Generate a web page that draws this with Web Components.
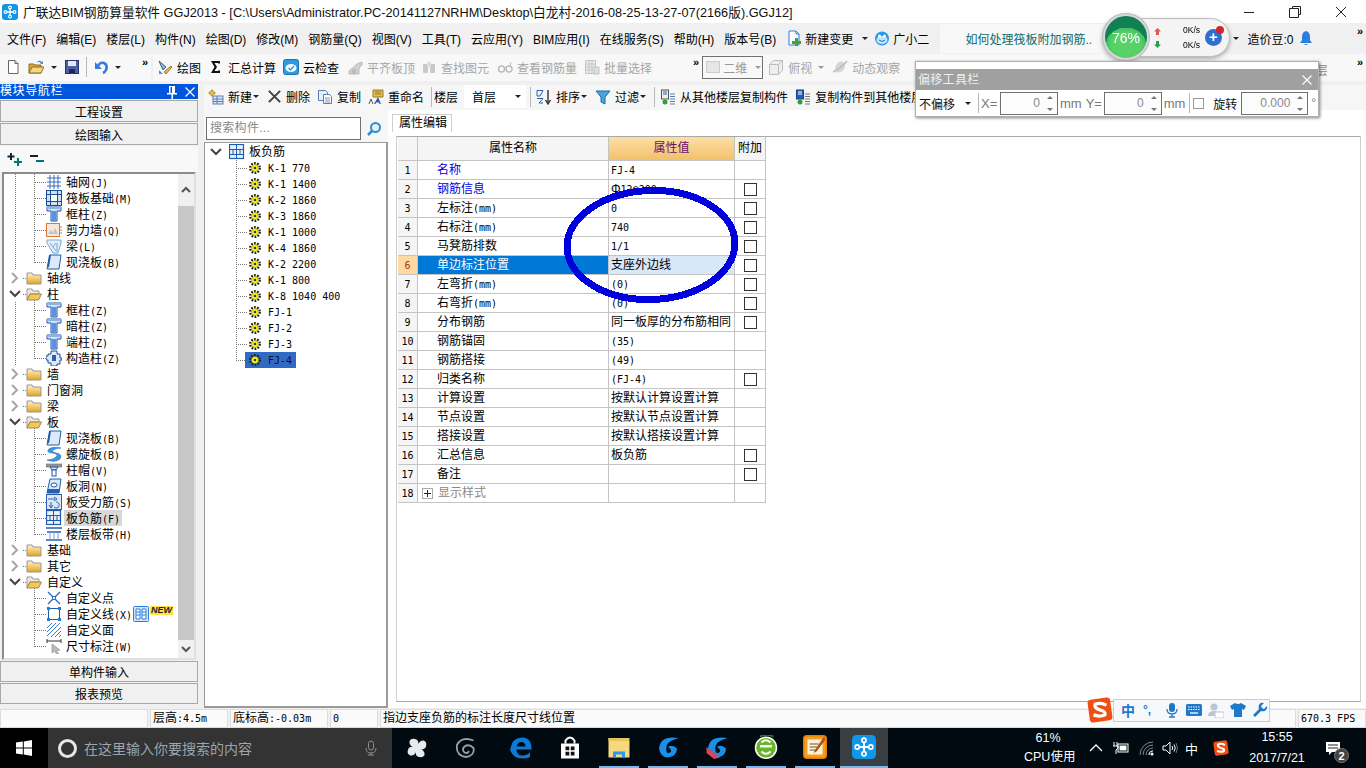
<!DOCTYPE html>
<html lang="zh">
<head>
<meta charset="utf-8">
<title>GGJ2013</title>
<style>
  html, body { margin: 0; height: 100%; }
  body {
    position: relative; width: 1366px; height: 768px; overflow: hidden;
    display: flex; flex-direction: column; background: #f0f0f0; color: #000;
    font: 12px "Liberation Sans", "Noto Sans CJK SC", sans-serif;
  }
  .work { display: flex; height: 624px; }
  .work-right { flex: 1; display: flex; flex-direction: column; margin-left: 6px; min-width: 0; }
  .work-body { flex: 1; display: flex; min-height: 0; }
</style>
</head>
<body>
<title-bar></title-bar>
<menu-bar></menu-bar>
<main-toolbar></main-toolbar>
<div class="work">
  <nav-panel></nav-panel>
  <div class="work-right">
    <comp-toolbar></comp-toolbar>
    <div class="work-body">
      <comp-panel></comp-panel>
      <prop-panel></prop-panel>
    </div>
  </div>
</div>
<status-bar></status-bar>
<task-bar></task-bar>
<net-widget></net-widget>
<offset-toolbar></offset-toolbar>
<ink-ellipse></ink-ellipse>
<ime-bar></ime-bar>

<script>
// icon shapes, all drawn in a 16x16 box
const ICONS = {
  logo: '<rect width="16" height="16" rx="3" fill="#1296e8"/><path d="M8 4.500v7M4.500 8h7" stroke="#fff" stroke-width="1.300"/><g fill="none" stroke="#fff" stroke-width="1.100"><circle cx="8" cy="3.500" r="1.400"/><circle cx="8" cy="12.500" r="1.400"/><circle cx="3.500" cy="8" r="1.400"/><circle cx="12.500" cy="8" r="1.400"/></g>',
  doc: '<path d="M3.500 1.500h6.500l3 3v10h-9.500z" fill="#fff" stroke="#666"/><path d="M10 1.500v3h3" fill="#ddd" stroke="#666"/>',
  open: '<path d="M1 5h5l1 1h6v8H1z" fill="#d9a53c" stroke="#8f6d25"/><path d="M4 8h12l-3 6H1z" fill="#f6d77f" stroke="#8f6d25"/><path d="M8 4q3-4 6-1l1-1v3h-3l1-1q-3-2-5 0" fill="#4a90d0"/>',
  save: '<rect x="1.500" y="1.500" width="13" height="13" fill="#4a5fa8" stroke="#27346b"/><rect x="4" y="2" width="8" height="5" fill="#e4e9f5"/><rect x="5" y="10" width="6" height="4" fill="#1f2850"/>',
  undo: '<path d="M4 7q2-4 6-3 4 2 2 7-1 2-3 3" fill="none" stroke="#3a7bd5" stroke-width="2.600"/><path d="M1 3l7 7H1z" fill="#3a7bd5"/>',
  paint: '<path d="M2 2l7 6-3 3z" fill="#8fb8e0" stroke="#3a5f8f"/><path d="M7 13l7-6 1 1-6 7z" fill="#e8c04a" stroke="#96782a"/><path d="M2 11l4 4H2z" fill="#4a90d0"/>',
  sigma: '<path d="M3 2h9v2.500H10V4H6.500L9 8l-2.500 4H10v-.5h2V14H3l3.500-6z" fill="#111"/>',
  cloud: '<rect x=".5" y=".5" width="15" height="15" rx="2" fill="#2f9ae0" stroke="#1a74b5"/><ellipse cx="8" cy="9" rx="5.500" ry="4" fill="#fff"/><path d="M5.500 9l2 2 3.500-4" fill="none" stroke="#2f9ae0" stroke-width="1.500"/>',
  align: '<path d="M2 12l8-7 5-2v3l-3 3v6H2z" fill="#d0d0d0" stroke="#bbb"/><rect x="5" y="10" width="4" height="5" fill="#bbb"/>',
  binoc: '<rect x="2" y="5" width="5" height="9" rx="1" fill="#c9c9c9"/><rect x="9" y="5" width="5" height="9" rx="1" fill="#c9c9c9"/><rect x="6" y="3" width="4" height="5" fill="#ddd"/>',
  glasses: '<circle cx="4.500" cy="10" r="3" fill="none" stroke="#bbb" stroke-width="1.500"/><circle cx="12" cy="10" r="3" fill="none" stroke="#bbb" stroke-width="1.500"/><path d="M7 9q1-1 2 0M13 7l1-4" stroke="#bbb" fill="none"/>',
  batch: '<path d="M1.500 1.500h10v13h-10zM1.500 5h10M1.500 8h10M1.500 11h10M5 1.500v13M8 1.500v13" fill="#eee" stroke="#c4c4c4"/><path d="M10 8h5v7h-5z" fill="#ddd" stroke="#c4c4c4"/>',
  cube: '<path d="M1.500 5.500l4-4h9v10l-4 4h-9z" fill="#eee" stroke="#bdbdbd"/><path d="M1.500 5.500h9v10M10.500 5.500l4-4" fill="none" stroke="#bdbdbd"/>',
  orbit: '<ellipse cx="8" cy="8" rx="4.500" ry="6" transform="rotate(35 8 8)" fill="#d6d6d6"/><path d="M1 13Q8 10 15 2" stroke="#bbb" stroke-width="1.500" fill="none"/>',
  add: '<rect x="5" y="7" width="10" height="8" fill="#dce6f4" stroke="#5a7fb5"/><path d="M5 10h10M5 12.500h10M9 7v8" stroke="#5a7fb5"/><path d="M3 1h2v2h2v2H5v2H3V5H1V3h2z" fill="#f0c23c" stroke="#a07d1c" stroke-width=".6"/>',
  del: '<path d="M2 2l12 12M14 2L2 14" stroke="#444" stroke-width="2.200"/>',
  copy: '<path d="M1.500 1.500h7l2 2v8h-9z" fill="#e8eff8" stroke="#5a7fb5"/><path d="M6.500 5.500h6l2 2v7h-8z" fill="#fff" stroke="#5a7fb5"/><path d="M8 9h5M8 11h5M8 13h5" stroke="#7a9ac8"/>',
  rename: '<path d="M5 1h10v7H5z" fill="#e6c04e" stroke="#96782a"/><path d="M7 3h6M7 5h6" stroke="#96782a"/><path d="M10 8l3 7h-1.500l-.5-1.500H8L7.500 15H6z" fill="#2a5fb0"/><path d="M1 15l2-5 2 5" fill="none" stroke="#555"/>',
  sort: '<path d="M1 1.500h6L4 7H1zM1 9.500h6L3 14h4" fill="none" stroke="#2a5fb0"/><path d="M12 1v12M9.500 11l2.500 4 2.500-4" fill="none" stroke="#222" stroke-width="1.300"/>',
  funnel: '<path d="M1 2h14L10 8v7l-4-2V8z" fill="#4aa3df" stroke="#1d6fa8"/>',
  floorin: '<rect x="1.500" y="1" width="7" height="9" fill="#eee" stroke="#555"/><path d="M3 3h4M3 5h4" stroke="#2a5fb0"/><path d="M10 5h5M10 7.500h5M10 10h5M10 12.500h5M10 15h5" stroke="#5a7fb5"/><circle cx="5" cy="13" r="2.500" fill="#2e9e3e"/>',
  floorout: '<rect x="1.500" y="1" width="7" height="9" fill="#2a5fb0" stroke="#1a3f80"/><path d="M3 3h4M3 5h4" stroke="#fff"/><path d="M10 5h5M10 7.500h5M10 10h5M10 12.500h5M10 15h5" stroke="#777"/><circle cx="5" cy="13" r="2.500" fill="#2e9e3e"/>',
  search: '<circle cx="9.500" cy="6.500" r="4.500" fill="#e3f2fb" stroke="#2c8fd0" stroke-width="2"/><path d="M6 10l-4 4" stroke="#2c8fd0" stroke-width="2.500"/>',
  plusplus: '<path d="M5 2v7M1.500 5.500h7" stroke="#123" stroke-width="2"/><path d="M12 7v8M8 11h8" stroke="#077" stroke-width="2"/>',
  minusminus: '<path d="M1 5h8" stroke="#123" stroke-width="2"/><path d="M7 10h8" stroke="#077" stroke-width="2"/>',
  grid: '<path d="M1 4h14M1 8h14M1 12h14M4 1v14M8 1v14M12 1v14" stroke="#3a6cb8" fill="none"/>',
  raft: '<rect x=".5" y=".5" width="15" height="15" fill="#cfe0f2" stroke="#1d4f94"/><rect x="4.500" y="4.500" width="7" height="7" fill="#fff" stroke="#1d4f94"/><path d="M.5 4.500h15M.5 11.500h15M4.500 .5v15M11.500 .5v15" stroke="#1d4f94"/>',
  col: '<path d="M1 1h14v4h-4v10H5V5H1z" fill="#cfe0f5" stroke="#2258a8"/><path d="M6 5h4v10H6z" fill="#5d93dc"/><path d="M1 1h14v2H1z" fill="#8fb5e6"/>',
  wall: '<rect x=".5" y="1.500" width="13" height="13" fill="#f3e8dc" stroke="#d87a3c"/><path d="M2 12l3-4 2 3 2-5 3 6z" fill="#c4c4c4"/><path d="M13 5h3M13 8h3M13 11h3" stroke="#d87a3c"/>',
  beam: '<path d="M1 2h14v3l-3 10H7L1 5z" fill="#e3eefa" stroke="#7aa8dc"/><path d="M4 5l6 8M10 5l-3 4M11 5v9" stroke="#7aa8dc" fill="none"/>',
  slab: '<path d="M4 1h11l-2 14H1z" fill="#dce9f8" stroke="#1f5cb0"/><path d="M2 13l2-12" stroke="#1f5cb0" stroke-width="2"/>',
  conn: '<path d="M5 1h6v3h3v4h2v2h-2v4h-3v2H5v-3H2v-3H0V6h2V4h3z" fill="#dce9f8" stroke="#1f4f96"/><rect x="6" y="5" width="4" height="6" fill="#2a5fb0"/>',
  spiral: '<path d="M15 2Q5 0 2 4q-1 3 5 3 6 1 3 4-3 3-9 3 8 3 13-1 3-5-4-6-5-1-3-3 3-2 8-2" fill="#3d95e0" stroke="#1f6fbc" stroke-width=".6"/>',
  cap: '<rect y="2" width="16" height="3" fill="#999" stroke="#666" stroke-width=".6"/><path d="M4 5h8l-2 3H6z" fill="#cfe0f5" stroke="#2258a8"/><rect x="6" y="8" width="4" height="6" fill="#fff" stroke="#2258a8"/>',
  hole: '<path d="M4 1h11l-2 14H1z" fill="#dce9f8" stroke="#1f5cb0"/><ellipse cx="8" cy="7" rx="3" ry="2" fill="#fff" stroke="#1f5cb0"/><path d="M2 11h11v4H1z" fill="#2a5fb0"/>',
  slabrb: '<rect x=".5" y=".5" width="15" height="15" fill="#dbe8f7" stroke="#2a5fb0"/><path d="M2 5h7M8 3l3 2-3 2M5 8v6M3 11l2 3 2-3M10 8a3 3 0 1 1-2 5" fill="none" stroke="#2a5fb0"/>',
  slabn: '<rect x=".5" y=".5" width="14" height="14" fill="#e8f0fa" stroke="#1f5cb0" stroke-width="1.200"/><path d="M1 5.500h13M1 10.500h13M4 5.500v5M11 5.500v5M7.500 .5v14" stroke="#1f5cb0" fill="none"/>',
  band: '<path d="M0 2h16M0 14h16M1 6h14" stroke="#2a5fb0" stroke-width="1.500"/><path d="M4 6v8M8 6v8M12 6v8" stroke="#6f9ad4"/>',
  point: '<path d="M2 2l12 12M14 2L2 14" stroke="#2a6bc0" stroke-width="1.300"/><circle cx="8" cy="8" r="1.600" fill="#fff" stroke="#2a6bc0"/>',
  line: '<rect x="2.500" y="2.500" width="11" height="11" fill="none" stroke="#1f5cb0"/><path d="M1 1h3v3H1zM12 1h3v3h-3zM1 12h3v3H1zM12 12h3v3h-3z" fill="#1f7fe0"/>',
  face: '<path d="M1 6l5-5M1 10l9-9M1 14L14 1M5 15L15 5M9 15l6-6M13 15l2-2" stroke="#3f7ad0"/>',
  dim: '<path d="M1 1v4M15 1v4M1 3h14" stroke="#333"/><path d="M6 6l8 6-3.500 .5 2 3-2 .5-2-3-2.500 2z" fill="#bbb" stroke="#888" stroke-width=".6"/>',
  gridbox: '<rect x=".5" y=".5" width="15" height="15" rx="1" fill="#d4e8fb" stroke="#2a7fd8"/><path d="M3 3h4v10H3zM9 3h4v10H9zM3 6h4M3 9h4M9 6h4M9 9h4" fill="#fff" stroke="#2a7fd8"/>',
  gear: '<circle cx="8" cy="8" r="5.500" fill="none" stroke="#222" stroke-width="2.600" stroke-dasharray="2 1.450"/><circle cx="8" cy="8" r="4" fill="#ff0" stroke="#444" stroke-width=".5"/><circle cx="8" cy="8" r="1.500" fill="#234"/>',
  folder: '<path d="M1 3h5l1 2h8v9H1z" fill="url(#fg)" stroke="#9a9a8a"/><defs><linearGradient id="fg" x2="0" y2="1"><stop offset="0" stop-color="#fff3c4"/><stop offset="1" stop-color="#e3a520"/></linearGradient></defs>',
  folderopen: '<path d="M1 3h5l1 2h6v3H4l-3 6z" fill="#efe9d4" stroke="#999"/><path d="M4 8h11.500l-3 6H1z" fill="#f3c65a" stroke="#a08a4a"/>',
  chevr: '<path d="M5 3l5 5-5 5" fill="none" stroke="#a6a6a6" stroke-width="2"/>',
  chevd: '<path d="M3 5l5 5 5-5" fill="none" stroke="#444" stroke-width="2"/>',
  chevu: '<path d="M4 10l4-4 4 4" fill="none" stroke="#555" stroke-width="2"/>',
  chevb: '<path d="M4 6l4 4 4-4" fill="none" stroke="#555" stroke-width="2"/>',
  pin: '<path d="M5 2h6v7h2v1.500H9V15H7.500v-4.500H3V9h2z" fill="#fff"/><rect x="6.500" y="3" width="1.500" height="6" fill="#0055dd"/>',
  close: '<path d="M3.500 3.500l9 9M12.500 3.500l-9 9" stroke="currentColor" stroke-width="1.200" fill="none"/>',
  change: '<path d="M3 1h7l3 3v11H3z" fill="#fff" stroke="#2a7fd8"/><path d="M10 1v3h3" fill="none" stroke="#2a7fd8"/><path d="M9 8h3v3h3v3h-3v2H9v-2H6v-3h3z" fill="#3fa33f"/>',
  mascot: '<circle cx="8" cy="8.500" r="7" fill="#2a9ae6"/><ellipse cx="8" cy="10" rx="5.500" ry="4" fill="#bfe6fb"/><circle cx="5.500" cy="6" r="1.500" fill="#fff"/><circle cx="10.500" cy="6" r="1.500" fill="#fff"/><path d="M5 10q3 3 6 0" stroke="#1a6fb5" fill="none"/>',
  bell: '<path d="M8 1q4 1 4 6v3l2 3H2l2-3V7q0-5 4-6z" fill="#2a7fe0"/><path d="M6 14q2 2 4 0" fill="#2a7fe0"/>',
  win: '<path d="M0 2.500l6.800-1v6H0zM7.800 1.400L16 0v7.500H7.800zM0 8.500h6.800v6L0 13.500zM7.800 8.500H16V16l-8.200-1.400z" fill="#fff"/>',
  mic: '<rect x="5.500" y="1" width="5" height="9" rx="2.500" fill="none" stroke="#8a9298"/><path d="M3 8q0 5 5 5t5-5M8 13v2M5 15h6" fill="none" stroke="#8a9298"/>',
  fan: '<path d="M8 8Q2 7 2.500 3 4 0 8 2q2 2 0 6zM8 8q1-6 5-5.500 3 1.500 1 5.500-2 2-6 0zM8 8q6 1 5.500 5-1.500 3-5.500 1-2-2 0-6zM8 8q-1 6-5 5.500-3-1.500-1-5.500 2-2 6 0z" fill="#e6eaec"/>',
  swirl: '<path d="M13 3Q5 0 2 6q-1 7 6 8 6-1 5-6-3-3-6-1-2 2 0 4 2 1 3-1" fill="none" stroke="#9aa0a3" stroke-width="1.200"/>',
  edge: '<path d="M1 8q1-7 8-7 6 0 6 8H5q0 4 4 4 3 0 5-2v3q-2 1-5 1-6 0-8-5-.5-1 0-2zM5 7h6q0-3-3-3-2 0-3 3z" fill="#0a7ad6"/>',
  store: '<path d="M2 5h12v10H2z" fill="#fff"/><path d="M5 5V3q3-4 6 0v2" fill="none" stroke="#fff" stroke-width="1.300"/><path d="M5 7h2.500v2.500H5zM8.500 7H11v2.500H8.500zM5 10.500h2.500V13H5zM8.500 10.500H11V13H8.500z" fill="#111"/>',
  explorer: '<path d="M1 2h6l1 2h7v11H1z" fill="#f5d97e"/><rect x="1" y="2" width="14" height="2" fill="#e9c65a"/><path d="M4 15v-4h8v4h-2v-2H6v2z" fill="#2b9ae8"/>',
  gblue: '<path d="M15 2Q3 0 2 9q1 6 6 6 6-1 6-6-3-3-6-1 2 1 2 3-2 2-3 0-1-5 3-7 2-1 5-2z" fill="#1a8fe8"/>',
  gred: '<path d="M15 2Q3 0 2 9q1 6 6 6 6-1 6-6-3-3-6-1 2 1 2 3-2 2-3 0-1-5 3-7 2-1 5-2z" fill="#1a8fe8"/><path d="M1 8l9 7-4 1-5-4z" fill="#d8465a"/>',
  egreen: '<circle cx="8" cy="8.500" r="7" fill="#69b52c" stroke="#fff"/><path d="M4 7.500h8" stroke="#fff" stroke-width="1.600"/><path d="M5 5q3-3 6 0M5 11q3 3 6 0" fill="none" stroke="#fff" stroke-width="1.300"/><path d="M4 1q5-2 9 0" stroke="#3a7a18" fill="none"/>',
  notes: '<rect x=".5" y=".5" width="15" height="15" rx="2" fill="#f59d1c" stroke="#d8800c"/><rect x="3" y="3" width="10" height="10" fill="#fdf2d8"/><path d="M4.500 6h6M4.500 8h6M4.500 10h5" stroke="#9a8a6a"/><path d="M14 1l-6 9-1 2 2-1 6-8z" fill="#b0501c"/>',
  battery: '<rect x="5" y="4" width="10" height="8" fill="none" stroke="#fff"/><rect x="6.500" y="5.500" width="7" height="5" fill="#fff"/><path d="M1 2v4M4 2v4M0 6h5v2l-2 2v4" stroke="#fff" fill="none"/>',
  wifi: '<path d="M2 15A13 13 0 0 1 15 2M5 15A10 10 0 0 1 15 5M8 15a7 7 0 0 1 7-7" fill="none" stroke="#888"/><path d="M11 15a4 4 0 0 1 4-4" fill="none" stroke="#fff" stroke-width="1.200"/><circle cx="14" cy="14" r="1.500" fill="#fff"/>',
  sound: '<path d="M1 6h3l4-4v12l-4-4H1z" fill="none" stroke="#fff"/><path d="M10 6q1.500 2 0 4M12 4.500q2.500 3.500 0 7" stroke="#fff" fill="none"/><path d="M14 3q3 5 0 10" stroke="#777" fill="none"/>',
  sogou: '<rect x="1" y="1" width="14" height="14" rx="2" fill="#f04e14" transform="rotate(-8 8 8)"/><path d="M12 5Q8 3 5 4.500q-1 2 3 3.500 4 1 3 3-3 1.500-7 0" fill="none" stroke="#fff" stroke-width="2"/>',
  imemic: '<rect x="5" y="1" width="6" height="9" rx="3" fill="#1f78c8"/><path d="M3 7q0 5 5 5t5-5M8 12v3M5 15h6" fill="none" stroke="#1f78c8" stroke-width="1.300"/>',
  imekey: '<rect y="2" width="16" height="12" rx="1.500" fill="#1f78c8"/><path d="M2 5h12M2 7.500h12" stroke="#fff" stroke-dasharray="1.500 1" /><path d="M4 11h8" stroke="#fff" stroke-width="1.300"/>',
  imeuser: '<circle cx="6" cy="5" r="3.500" fill="#b9c6d4"/><path d="M0 14q0-5 6-5t6 5z" fill="#b9c6d4"/><rect x="7" y="10" width="9" height="6" rx="1" fill="#fff" stroke="#b9c6d4"/>',
  imeshirt: '<path d="M5 1L0 4l2 4 2-1v8h8V7l2 1 2-4-5-3q-3 2-6 0z" fill="#1f78c8"/>',
  imewrench: '<path d="M15 4l-3 3-2-1-1-2 3-3q-4-1-5 2-1 2 0 4L1 13l2 2 6-6q3 1 5-1 2-2 1-4z" fill="#1f78c8"/>'
};

// wraps latin runs so that they take the half-width of the bitmap font in the grids
const mix = text => text.replace(/[\x20-\x7e]+/g, m => `<span class="a">${m}</span>`);
const MONO_CSS = `.a { font: 10px "DejaVu Sans Mono", "Liberation Mono", monospace; white-space: pre; }`;

class Part extends HTMLElement {
  constructor() {
    super();
    this.attachShadow({ mode: 'open' });
  }
  connectedCallback() {
    this.shadowRoot.innerHTML = `<style>${this.constructor.css || ''}</style>${this.render()}`;
  }
  render() { return '<slot></slot>'; }
}

class UiIcon extends Part {
  static css = `:host { display: inline-flex; flex: none; } svg { display: block; }`;
  render() {
    const s = this.getAttribute('size') || 16;
    return `<svg width="${s}" height="${s}" viewBox="0 0 16 16">${ICONS[this.getAttribute('name')] || ''}</svg>`;
  }
}

class ToolBtn extends Part {
  static css = `
    :host { display: inline-flex; align-items: center; gap: 4px; flex: none; white-space: nowrap; }
    :host([off]) { color: #a6a6a6; }
  `;
  render() {
    const i = this.getAttribute('icon');
    return `${i ? `<ui-icon name="${i}" size="${this.getAttribute('size') || 16}"></ui-icon>` : ''}<slot></slot>`;
  }
}

class DropCaret extends Part {
  static css = `
    :host { display: inline-block; flex: none; width: 0; height: 0; margin: 0 1px;
      border: 3px solid transparent; border-top: 3px solid #222; border-bottom: 0; }
    :host([off]) { border-top-color: #999; }
  `;
  render() { return ''; }
}

class MoreMark extends Part {
  static css = `:host { flex: none; font: bold 11px/8px "Liberation Sans", sans-serif; align-self: flex-start; margin-top: 4px; letter-spacing: -1px; }`;
  render() { return '&raquo;'; }
}

class ToolSep extends Part {
  static css = `:host { display: block; flex: none; width: 1px; height: 20px; background: #b8b8b8; }`;
  render() { return ''; }
}

class TitleBar extends Part {
  static css = `
    :host { display: flex; align-items: center; height: 23px; background: #fff; padding: 0 2px; font-size: 12.730px; }
    .t { margin-left: 5px; flex: 1; white-space: nowrap; color: #111; }
    .w { width: 46px; display: flex; justify-content: center; color: #222; }
    svg { display: block; }
  `;
  render() {
    return `<ui-icon name="logo"></ui-icon>
      <span class="t">广联达BIM钢筋算量软件 GGJ2013 - [C:\\Users\\Administrator.PC-20141127NRHM\\Desktop\\白龙村-2016-08-25-13-27-07(2166版).GGJ12]</span>
      <span class="w"><svg width="12" height="12"><path d="M1 6.500h10" stroke="#222"/></svg></span>
      <span class="w"><svg width="12" height="12"><path d="M3.500 2.500v-2h8v8h-2M.5 2.500h9v9h-9z" fill="none" stroke="#222"/></svg></span>
      <span class="w"><svg width="12" height="12"><path d="M1 1l10 10M11 1L1 11" stroke="#222"/></svg></span>`;
  }
}

class MenuBar extends Part {
  static css = `
    :host { display: flex; align-items: center; gap: 10px; height: 30px; padding: 0 4px 0 7px; background: #f0f0f0; white-space: nowrap; }
    .ic { display: inline-flex; align-items: center; gap: 3px; }
    .tip { display: flex; align-items: center; margin-left: 1px; width: 168px; padding-left: 25px; height: 29px; background: #f8f8f8; color: #0b6b6b; box-sizing: border-box; border-radius: 4px 0 0 0; }
    .right { margin-left: 114px; display: flex; align-items: center; gap: 2px; }
    .more { margin-left: auto; }
  `;
  render() {
    const items = ['文件(F)', '编辑(E)', '楼层(L)', '构件(N)', '绘图(D)', '修改(M)', '钢筋量(Q)', '视图(V)', '工具(T)', '云应用(Y)', 'BIM应用(I)', '在线服务(S)', '帮助(H)', '版本号(B)'];
    return `${items.map(m => `<span>${m}</span>`).join('')}
      <span class="ic"><ui-icon name="change"></ui-icon>新建变更<drop-caret style="margin-left:6px"></drop-caret></span>
      <span class="ic" style="margin-left:-5px"><ui-icon name="mascot"></ui-icon>广小二</span>
      <span class="tip">如何处理筏板附加钢筋..</span>
      <span class="right"><drop-caret style="margin-right:6px"></drop-caret>造价豆:0<ui-icon name="bell" style="margin-left:3px"></ui-icon></span>
      <more-mark class="more"></more-mark>`;
  }
}

class MainToolbar extends Part {
  static css = `
    :host { display: flex; align-items: center; height: 31px; padding-bottom: 3px; box-sizing: border-box; white-space: nowrap; }
    .strip { display: flex; align-items: center; height: 27px; background: #f8f8f8; }
    .a { width: 151px; margin-right: 2px; }
    .b { flex: 1; }
    .dim { display: flex; align-items: center; width: 61px; height: 23px; box-sizing: border-box; border: 1px solid #707070; padding-left: 3px; color: #999; gap: 3px; margin-left: 4px; }
    .dim i { width: 15px; height: 10px; background: #e6e6e6; border: 1px solid #ccc; }
    .dim drop-caret { margin-left: 5px; }
    .peek { margin-left: auto; color: #888; align-self: flex-start; margin-top: 7px; }
    .end { margin-left: 29px; margin-right: 4px; }
  `;
  render() {
    return `<div class="strip a">
        <tool-btn icon="doc" style="margin-left:5px"></tool-btn>
        <tool-btn icon="open" style="margin-left:7px"></tool-btn>
        <drop-caret style="margin-left:7px"></drop-caret>
        <tool-btn icon="save" style="margin-left:6px"></tool-btn>
        <tool-sep style="margin-left:6px"></tool-sep>
        <tool-btn icon="undo" style="margin-left:7px"></tool-btn>
        <drop-caret style="margin-left:5px"></drop-caret>
        <more-mark style="margin-left:20px"></more-mark>
      </div>
      <div class="strip b">
        <tool-btn icon="paint" style="margin-left:4px">绘图</tool-btn>
        <tool-btn icon="sigma" style="margin-left:7px">汇总计算</tool-btn>
        <tool-btn icon="cloud" style="margin-left:7px">云检查</tool-btn>
        <tool-btn icon="align" off style="margin-left:8px">平齐板顶</tool-btn>
        <tool-btn icon="binoc" off style="margin-left:6px">查找图元</tool-btn>
        <tool-btn icon="glasses" off style="margin-left:8px">查看钢筋量</tool-btn>
        <tool-btn icon="batch" off style="margin-left:7px">批量选择</tool-btn>
        <more-mark style="margin-left:41px"></more-mark>
        <div class="dim"><i></i>二维<drop-caret off></drop-caret></div>
        <tool-btn icon="cube" off style="margin-left:5px">俯视</tool-btn>
        <drop-caret off style="margin-left:6px"></drop-caret>
        <tool-btn icon="orbit" off style="margin-left:7px">动态观察</tool-btn>
        <span class="peek">层</span>
        <more-mark class="end"></more-mark>
      </div>`;
  }
}

class NavButton extends Part {
  static css = `
    :host { display: flex; align-items: center; justify-content: center; height: 22px; box-sizing: border-box; border: 1px solid #a8a8a8; background: #f0f0f0; margin-bottom: 1px; }
  `;
}

class TreeRow extends Part {
  static css = `
    :host { display: flex; align-items: center; height: 16px; white-space: nowrap; flex: none; background-repeat: no-repeat; }
    .exp { margin-left: 3px; }
    .grp { margin-left: 3px; }
    .leaf { margin-left: 42px; }
    .lb { padding: 0 2px; margin-left: 2px; line-height: 18px; height: 16px; }
    .sel { background: #d8d8d8; }
    .new { font: bold italic 9px/9px "Liberation Sans", sans-serif; background: #ffe14d; color: #222; padding: 0 1px; align-self: flex-start; margin-left: 1px; }
    ${MONO_CSS}
  `;
  connectedCallback() {
    super.connectedCallback();
    const h = 'repeating-linear-gradient(90deg,#777 0 1px,transparent 1px 2px)';
    const v = 'repeating-linear-gradient(#777 0 1px,transparent 1px 2px)';
    const layers = [];
    const add = (img, size, pos) => layers.push({ img, size, pos });
    if (this.hasAttribute('leaf')) {
      add(h, '11px 1px', '31px 8px');
      add(v, '1px ' + (this.hasAttribute('last') ? '9px' : '16px'), '30px 0');
    } else {
      add(h, '3px 1px', '19px 8px');
      if (this.hasAttribute('open')) add(v, '1px 8px', '30px 8px');
    }
    if (this.hasAttribute('cont')) add(v, '1px 16px', '11px 0');
    this.style.backgroundImage = layers.map(l => l.img).join(',');
    this.style.backgroundSize = layers.map(l => l.size).join(',');
    this.style.backgroundPosition = layers.map(l => l.pos).join(',');
  }
  render() {
    const label = mix(this.getAttribute('label'));
    const sel = this.hasAttribute('sel') ? ' sel' : '';
    if (this.hasAttribute('leaf')) {
      const extra = this.hasAttribute('fresh') ? '<ui-icon name="gridbox" style="margin-left:-1px"></ui-icon><span class="new">NEW</span>' : '';
      return `<ui-icon class="leaf" name="${this.getAttribute('icon')}"></ui-icon><span class="lb${sel}">${label}</span>${extra}`;
    }
    const open = this.hasAttribute('open');
    return `<ui-icon class="exp" name="${open ? 'chevd' : 'chevr'}"></ui-icon>
      <ui-icon class="grp" name="${open ? 'folderopen' : 'folder'}"></ui-icon><span class="lb" style="margin-left:3px">${label}</span>`;
  }
}

class NavTree extends Part {
  static css = `
    :host { display: flex; margin: 0 2px; height: 488px; box-sizing: border-box; background: #fff; border: 2px solid #8c8c8c; border-right-color: #e0e0e0; border-bottom-color: #e0e0e0; overflow: hidden; }
    .rows { flex: 1; display: flex; flex-direction: column; overflow: hidden; min-width: 0; }
    .bar { width: 16px; flex: none; display: flex; flex-direction: column; background: #f0f0f0; }
    .bar div { height: 32px; display: flex; align-items: center; justify-content: center; }
    .bar .thumb { flex: 1; height: auto; background: #c8c8c8; }
    .bar .dn { height: 18px; }
  `;
  render() {
    const rows = [
      ['轴网(J)', 'grid', 1, 1], ['筏板基础(M)', 'raft', 1, 1], ['框柱(Z)', 'col', 1, 1], ['剪力墙(Q)', 'wall', 1, 1], ['梁(L)', 'beam', 1, 1], ['现浇板(B)', 'slab', 1, 1, 'last'],
      ['轴线', 'g'], ['柱', 'o'],
      ['框柱(Z)', 'col', 1, 1], ['暗柱(Z)', 'col', 1, 1], ['端柱(Z)', 'col', 1, 1], ['构造柱(Z)', 'conn', 1, 1, 'last'],
      ['墙', 'g'], ['门窗洞', 'g'], ['梁', 'g'], ['板', 'o'],
      ['现浇板(B)', 'slab', 1, 1], ['螺旋板(B)', 'spiral', 1, 1], ['柱帽(V)', 'cap', 1, 1], ['板洞(N)', 'hole', 1, 1], ['板受力筋(S)', 'slabrb', 1, 1], ['板负筋(F)', 'slabn', 1, 1, 'sel'], ['楼层板带(H)', 'band', 1, 1, 'last'],
      ['基础', 'g'], ['其它', 'g'], ['自定义', 'o'],
      ['自定义点', 'point', 1, 0], ['自定义线(X)', 'line', 1, 0, 'fresh'], ['自定义面', 'face', 1, 0], ['尺寸标注(W)', 'dim', 1, 0, 'last']
    ];
    const html = rows.map(([label, kind, leaf, cont, flag]) => {
      if (!leaf) return `<tree-row label="${label}" ${kind === 'o' ? 'open' : ''}></tree-row>`;
      return `<tree-row leaf label="${label}" icon="${kind}" ${cont ? 'cont' : ''} ${flag || ''}></tree-row>`;
    }).join('');
    return `<div class="rows">${html}</div>
      <div class="bar"><div><ui-icon name="chevu"></ui-icon></div><div class="thumb"></div><div class="dn"><ui-icon name="chevb"></ui-icon></div></div>`;
  }
}

class NavPanel extends Part {
  static css = `
    :host { display: flex; flex-direction: column; width: 198px; flex: none; background: #f0f0f0; }
    .head { display: flex; align-items: center; height: 15px; background: #0055dd; color: #fff; letter-spacing: .6px; line-height: 15px; margin-bottom: 1px; }
    .head b { font-weight: normal; flex: 1; }
    .head ui-icon { color: #fff; margin-left: 2px; }
    .ops { display: flex; align-items: center; height: 26px; padding-left: 6px; gap: 7px; background: #f8f8f8; }
    .btns2 { margin-top: 1px; }
  `;
  render() {
    return `<div class="head"><b>模块导航栏</b><ui-icon name="pin"></ui-icon><ui-icon name="close"></ui-icon></div>
      <nav-button>工程设置</nav-button>
      <nav-button>绘图输入</nav-button>
      <div class="ops"><ui-icon name="plusplus"></ui-icon><ui-icon name="minusminus"></ui-icon></div>
      <nav-tree></nav-tree>
      <div class="btns2"><nav-button style="height:21px">单构件输入</nav-button><nav-button style="height:21px">报表预览</nav-button></div>`;
  }
}

class CompToolbar extends Part {
  static css = `
    :host { display: flex; align-items: center; height: 25px; flex: none; background: #f6f6f6; white-space: nowrap; margin-top: 1px; box-sizing: border-box; padding-bottom: 2px; overflow: hidden; }
    .sel { display: flex; align-items: center; width: 62px; height: 23px; background: #fff; padding-left: 8px; box-sizing: border-box; }
    .sel drop-caret { margin-left: auto; margin-right: 5px; }
  `;
  render() {
    return `<tool-btn icon="add" style="margin-left:4px">新建</tool-btn><drop-caret></drop-caret>
      <tool-btn icon="del" size="15" style="margin-left:7px">删除</tool-btn>
      <tool-btn icon="copy" style="margin-left:7px">复制</tool-btn>
      <tool-btn icon="rename" style="margin-left:7px">重命名</tool-btn>
      <tool-sep style="margin-left:7px"></tool-sep>
      <span style="margin-left:2px">楼层</span>
      <div class="sel" style="margin-left:6px">首层<drop-caret></drop-caret></div>
      <tool-sep style="margin-left:4px"></tool-sep>
      <tool-btn icon="sort" style="margin-left:5px">排序</tool-btn><drop-caret></drop-caret>
      <tool-btn icon="funnel" style="margin-left:7px">过滤</tool-btn><drop-caret></drop-caret>
      <tool-sep style="margin-left:7px"></tool-sep>
      <tool-btn icon="floorin" style="margin-left:5px">从其他楼层复制构件</tool-btn>
      <tool-btn icon="floorout" style="margin-left:7px">复制构件到其他楼层</tool-btn>`;
  }
}

class CompPanel extends Part {
  static css = `
    :host { display: flex; flex-direction: column; width: 184px; flex: none; background: #fff; }
    .find { display: flex; align-items: center; height: 32px; flex: none; padding: 7px 0 2px 2px; box-sizing: border-box; background: #f6f6f6; }
    .box { width: 155px; height: 23px; box-sizing: border-box; border: 1px solid #707070; background: #fff; color: #8a8a8a; padding-left: 3px; line-height: 21px; letter-spacing: .3px; }
    .find ui-icon { margin-left: 5px; }
    .tree { flex: 1; border: 2px solid #9a9a9a; border-width: 1px 2px 2px 1px; padding-top: 1px; display: flex; flex-direction: column; }
    .row { display: flex; align-items: center; height: 16px; flex: none; white-space: nowrap; background-repeat: no-repeat; }
    .root { padding-left: 3px; }
    .item { padding-left: 43px; background-image: repeating-linear-gradient(90deg,#777 0 1px,transparent 1px 2px), repeating-linear-gradient(#777 0 1px,transparent 1px 2px); background-size: 11px 1px, 1px 16px; background-position: 31px 8px, 31px 0; }
    .last { height: 16px; flex: none; background: repeating-linear-gradient(90deg,#777 0 1px,transparent 1px 2px) 31px 8px/10px 1px no-repeat, repeating-linear-gradient(#777 0 1px,transparent 1px 2px) 31px 0/1px 9px no-repeat; }
    .lb { padding: 0 2px 0 6px; line-height: 16px; }
    .on { background: #316ac5; margin-left: 40px; padding-left: 3px; width: 48px; }
    .on .lb { color: #111; }
    ${MONO_CSS}
  `;
  render() {
    const names = ['K-1 770', 'K-1 1400', 'K-2 1860', 'K-3 1860', 'K-1 1000', 'K-4 1860', 'K-2 2200', 'K-1 800', 'K-8 1040 400', 'FJ-1', 'FJ-2', 'FJ-3'];
    return `<div class="find"><div class="box">搜索构件...</div><ui-icon name="search"></ui-icon></div>
      <div class="tree">
        <div class="row root"><ui-icon name="chevd"></ui-icon><span style="width:5px"></span><ui-icon name="slabn"></ui-icon><span class="lb" style="padding-left:4px">板负筋</span></div>
        ${names.map(n => `<div class="row item"><ui-icon name="gear" size="14"></ui-icon><span class="lb">${mix(n)}</span></div>`).join('')}
        <div class="last"><div class="row on"><ui-icon name="gear" size="14"></ui-icon><span class="lb">${mix('FJ-4')}</span></div></div>
      </div>`;
  }
}

class PropRow extends Part {
  static css = `
    :host { display: grid; grid-template-columns: 20px 191px 126px 31px; height: 19px; }
    div { box-sizing: border-box; border-right: 1px solid #c4c4c4; border-bottom: 1px solid #c4c4c4; line-height: 18px; white-space: nowrap; overflow: hidden; background: #fff; }
    .n { background: #f5f5f5; text-align: center; }
    .k { padding-left: 19px; }
    .v { padding-left: 2px; }
    .c { display: flex; align-items: center; justify-content: center; }
    .c i { display: block; width: 13px; height: 13px; box-sizing: border-box; border: 1px solid #333; background: #fff; }
    :host([link]) .k { color: #0000e6; }
    :host([on]) .n { background: #ffd9a0; color: #b03020; }
    :host([on]) .k { background: #0078d7; color: #fff; }
    :host([on]) .v { background: #d8e8f8; }
    :host([muted]) .k { color: #8a8a8a; padding-left: 4px; display: flex; align-items: center; gap: 5px; }
    .plus { width: 11px; height: 11px; box-sizing: border-box; border: 1px solid #aaa; background: #fff; }
    ${MONO_CSS}
  `;
  render() {
    const plus = this.hasAttribute('muted') ? '<svg class="plus" viewBox="0 0 9 9"><path d="M1 4.500h7M4.500 1v7" stroke="#222"/></svg>' : '';
    return `<div class="n">${mix(this.getAttribute('n'))}</div>
      <div class="k">${plus}<span>${mix(this.getAttribute('k'))}</span></div>
      <div class="v">${mix(this.getAttribute('v') || '')}</div>
      <div class="c">${this.hasAttribute('check') ? '<i></i>' : ''}</div>`;
  }
}

class PropPanel extends Part {
  static css = `
    :host { flex: 1; display: flex; flex-direction: column; min-width: 0; background: #fff; }
    .tabs { height: 21px; flex: none; display: flex; align-items: flex-end; padding: 0 0 0 4px; margin-top: 1px; }
    .tab { width: 60px; height: 18px; box-sizing: border-box; border: 1px solid #cfcfcf; border-bottom: 0; padding-left: 6px; line-height: 17px; background: #fff; }
    .frame { margin: 4px 5px 6px 8px; flex: 1; border: 1px solid #a8a8a8; border-color: #a8a8a8 #d0d0d0 #a8a8a8 #d0d0d0; padding: 0 0 0 1px; }
    .head { display: grid; grid-template-columns: 20px 191px 126px 31px; height: 24px; text-align: center; line-height: 23px; }
    .head div { box-sizing: border-box; border-right: 1px solid #c4c4c4; border-bottom: 1px solid #c4c4c4; background: #f5f5f5; }
    .head .val { background: linear-gradient(#fcdfa5, #f2c16a); color: #6a0f6a; }
  `;
  render() {
    const rows = [
      ['名称', 'FJ-4', 'link'], ['钢筋信息', 'Φ12@200', 'link check'], ['左标注(mm)', '0', 'check'], ['右标注(mm)', '740', 'check'],
      ['马凳筋排数', '1/1', 'check'], ['单边标注位置', '支座外边线', 'on check'], ['左弯折(mm)', '(0)', 'check'], ['右弯折(mm)', '(0)', 'check'],
      ['分布钢筋', '同一板厚的分布筋相同', 'check'], ['钢筋锚固', '(35)', ''], ['钢筋搭接', '(49)', ''], ['归类名称', '(FJ-4)', 'check'],
      ['计算设置', '按默认计算设置计算', ''], ['节点设置', '按默认节点设置计算', ''], ['搭接设置', '按默认搭接设置计算', ''],
      ['汇总信息', '板负筋', 'check'], ['备注', '', 'check'], ['显示样式', '', 'muted']
    ];
    return `<div class="tabs"><div class="tab">属性编辑</div></div>
      <div class="frame">
        <div class="head"><div></div><div>属性名称</div><div class="val">属性值</div><div>附加</div></div>
        ${rows.map(([k, v, f], i) => `<prop-row n="${i + 1}" k="${k}" v="${v}" ${f}></prop-row>`).join('')}
      </div>`;
  }
}

class StatusBar extends Part {
  static css = `
    :host { display: grid; grid-template-columns: 148px 78px 98px 48px 916px 68px; column-gap: 2px; height: 20px; flex: none; background: #f0f0f0; padding-top: 1px; box-sizing: border-box; }
    div { box-sizing: border-box; border: 1px solid #dcdcdc; background: #fafafa; padding-left: 2px; line-height: 17px; white-space: nowrap; overflow: hidden; }
    ${MONO_CSS}
  `;
  render() {
    return ['', '层高:4.5m', '底标高:-0.03m', '0', '指边支座负筋的标注长度尺寸线位置', '670.3 FPS'].map(t => `<div>${mix(t)}</div>`).join('');
  }
}

class TaskBar extends Part {
  static css = `
    :host { display: flex; height: 40px; flex: none; background: #000a10; color: #fff; }
    .start { width: 48px; background: #000; display: flex; align-items: center; justify-content: center; flex: none; }
    .search { width: 344px; flex: none; background: #333; display: flex; align-items: center; box-sizing: border-box; padding-left: 10px; color: #9aa5ad; font-size: 14px; }
    .search i { width: 13px; height: 13px; border: 3px solid #e6e6e6; border-radius: 50%; margin-right: 7px; flex: none; }
    .search ui-icon { margin-left: auto; margin-right: 13px; }
    .apps { display: flex; flex: none; }
    .app { width: 49px; height: 40px; box-sizing: border-box; display: flex; align-items: center; justify-content: center; }
    .app[data-run] { border-bottom: 2px solid #76b9ed; width: 40px; margin-left: 9px; }
    .app.first { margin-left: 5px; }
    .app[data-act] { background: #393f42; width: 48px; margin-left: 5px; }
    .sys { display: flex; align-items: center; flex: 1; font-size: 12px; }
    .cpu { width: 48px; text-align: center; line-height: 19px; font-size: 12.500px; white-space: nowrap; }
    .time { width: 60px; text-align: center; line-height: 21px; font-size: 12.500px; margin-left: 18px; white-space: nowrap; }
    .note { margin-left: 18px; position: relative; display: flex; }
    .note b { position: absolute; right: -8px; bottom: -7px; width: 15px; height: 15px; line-height: 15px; border-radius: 50%; background: #444; border: 1px solid #777; box-sizing: border-box; text-align: center; font-size: 11px; }
  `;
  render() {
    const plain = ['fan', 'swirl', 'edge', 'store'];
    const run = ['explorer', 'gblue', 'gred', 'egreen', 'notes'];
    return `<div class="start"><ui-icon name="win"></ui-icon></div>
      <div class="search"><i></i>在这里输入你要搜索的内容<ui-icon name="mic"></ui-icon></div>
      <div class="apps">
        ${plain.map(n => `<div class="app" ${n === 'edge' ? 'style="margin-left:6px"' : ''}><ui-icon name="${n}" size="${n === 'fan' ? 22 : 24}"></ui-icon></div>`).join('')}
        ${run.map((n, i) => `<div class="app${i ? '' : ' first'}" data-run><ui-icon name="${n}" size="24"></ui-icon></div>`).join('')}
        <div class="app" data-run data-act><ui-icon name="logo" size="24"></ui-icon></div>
      </div>
      <div class="sys">
        <div class="cpu" style="margin-left:136px">61%<br>CPU使用</div>
        <svg width="14" height="8" style="margin-left:17px"><path d="M1 7l6-6 6 6" fill="none" stroke="#fff" stroke-width="1.300"/></svg>
        <ui-icon name="battery" style="margin-left:10px"></ui-icon>
        <ui-icon name="wifi" style="margin-left:9px"></ui-icon>
        <ui-icon name="sound" style="margin-left:8px"></ui-icon>
        <span style="margin-left:7px;font-size:13px">中</span>
        <ui-icon name="sogou" style="margin-left:15px"></ui-icon>
        <div class="time">15:55<br>2017/7/21</div>
        <span class="note"><svg width="16" height="15"><path d="M1 1h14v10H7l-3 3v-3H1z" fill="#fff"/><path d="M3 4h10M3 7h10" stroke="#222"/></svg><b>2</b></span>
      </div>`;
  }
}

class NetWidget extends Part {
  static css = `
    :host { position: absolute; left: 1103px; top: 12px; width: 128px; height: 50px; display: flex; align-items: center; filter: drop-shadow(0 2px 2px rgba(0,0,0,.3)); }
    .ball { width: 46px; height: 46px; flex: none; box-sizing: border-box; border: 2px solid #d8d8d8; border-radius: 50%; color: #fff; font-size: 14px; text-align: center; line-height: 44px; z-index: 1; box-shadow: 0 0 0 1px #bbb;
      background: radial-gradient(ellipse 20px 17px at 50% 68%, #58d268 0 70%, #3fc060 100%, #128055 100%), #128055; }
    .pill { width: 94px; height: 39px; flex: none; margin: 1px 0 0 -13px; box-sizing: border-box; border: 1px solid #bdbdbd; border-radius: 0 20px 20px 0; background: #f4f4f4; display: flex; align-items: center; padding-left: 17px; }
    .arr { display: flex; flex-direction: column; gap: 6px; }
    .sp { font-size: 8.500px; line-height: 15px; margin-left: 16px; width: 23px; text-align: right; }
    .plus { width: 17px; height: 17px; border-radius: 50%; background: #2f6fd0; margin-left: 5px; color: #fff; font: bold 15px/16px "Liberation Sans", sans-serif; text-align: center; position: relative; }
    .plus::after { content: ""; position: absolute; right: -2px; top: -3px; width: 8px; height: 8px; border-radius: 50%; background: #d02828; }
  `;
  render() {
    return `<div class="ball">76%</div>
      <div class="pill">
        <div class="arr">
          <svg width="7" height="7"><path d="M3.500 0L7 3.500H5V7H2V3.500H0z" fill="#e0584a"/></svg>
          <svg width="7" height="7"><path d="M3.500 7L7 3.500H5V0H2v3.500H0z" fill="#2e9e4e"/></svg>
        </div>
        <div class="sp">0K/s<br>0K/s</div>
        <div class="plus">+</div>
      </div>`;
  }
}

class SpinBox extends Part {
  static css = `
    :host { display: flex; align-items: center; flex: none; height: 23px; box-sizing: border-box; border: 1px solid #707070; background: #fcfcfc; color: #8a8a8a; justify-content: flex-end; }
    svg { margin: 0 3px 0 6px; }
  `;
  render() {
    return `<slot></slot><svg width="8" height="17"><path d="M4 1l3 3H1zM4 16l3-3H1z" fill="#777"/></svg>`;
  }
}

class OffsetToolbar extends Part {
  static css = `
    :host { position: absolute; left: 915px; top: 61px; width: 404px; height: 56px; display: block; background: #fff; box-shadow: 1px 1px 3px rgba(0,0,0,.5); border: 1px solid #b0b0b0; box-sizing: border-box; }
    .head { margin-top: 7px; height: 21px; background: #a0a0a0; color: #eee; display: flex; align-items: center; justify-content: space-between; padding: 0 3px 2px 2px; box-sizing: border-box; font-size: 12px; letter-spacing: .3px; }
    .head ui-icon { color: #fff; margin-top: 2px; }
    .body { display: flex; align-items: center; height: 26px; background: #fff; color: #777; white-space: nowrap; }
    .sel { color: #111; width: 56px; display: flex; align-items: center; padding-left: 3px; box-sizing: border-box; gap: 9px; }
    .chk { width: 11px; height: 11px; box-sizing: border-box; border: 1px solid #999; margin: 0 9px 0 3px; flex: none; }
  `;
  render() {
    return `<div class="head"><span>偏移工具栏</span><ui-icon name="close"></ui-icon></div>
      <div class="body">
        <div class="sel">不偏移<drop-caret></drop-caret></div>
        <tool-sep style="margin:0 2px 0 6px"></tool-sep>
        <span style="font-size:13px;width:19px">X=</span>
        <spin-box style="width:58px">0</spin-box>
        <span style="margin:0 5px 0 2px;font-size:13px">mm</span>
        <span style="font-size:13px;width:18px;margin-left:-1px">Y=</span>
        <spin-box style="width:58px">0</spin-box>
        <span style="margin:0 4px 0 2px;font-size:13px">mm</span>
        <tool-sep></tool-sep>
        <span class="chk"></span>
        <span style="color:#111;margin-right:4px">旋转</span>
        <spin-box style="width:67px">0.000</spin-box>
        <span style="margin-left:3px">°</span>
      </div>`;
  }
}

class InkEllipse extends Part {
  static css = `:host { position: absolute; left: 560px; top: 184px; width: 182px; height: 122px; display: block; } svg { display: block; }`;
  render() {
    return `<svg width="182" height="122"><ellipse cx="91" cy="61" rx="84" ry="54.500" transform="rotate(-2 91 61)" fill="none" stroke="#0000dc" stroke-width="7" shape-rendering="crispEdges"/></svg>`;
  }
}

class ImeBar extends Part {
  static css = `
    :host { position: absolute; left: 1087px; top: 696px; display: flex; align-items: center; height: 28px; }
    .panel { display: flex; align-items: center; gap: 6px; height: 23px; width: 157px; box-sizing: border-box; padding-left: 7px; background: #f6f8fb; border: 1px solid #c0d0e0; color: #1f78c8; }
    .zh { font-size: 14px; font-weight: bold; width: 16px; }
    .pn { font: bold 12px/12px "Liberation Sans", sans-serif; width: 15px; }
  `;
  render() {
    return `<ui-icon name="sogou" size="26"></ui-icon>
      <div class="panel"><span class="zh">中</span><span class="pn">°,</span>
        <ui-icon name="imemic"></ui-icon><ui-icon name="imekey"></ui-icon><ui-icon name="imeuser"></ui-icon><ui-icon name="imeshirt"></ui-icon><ui-icon name="imewrench"></ui-icon></div>`;
  }
}

customElements.define('ui-icon', UiIcon);
customElements.define('tool-btn', ToolBtn);
customElements.define('drop-caret', DropCaret);
customElements.define('more-mark', MoreMark);
customElements.define('tool-sep', ToolSep);
customElements.define('title-bar', TitleBar);
customElements.define('menu-bar', MenuBar);
customElements.define('main-toolbar', MainToolbar);
customElements.define('nav-button', NavButton);
customElements.define('tree-row', TreeRow);
customElements.define('nav-tree', NavTree);
customElements.define('nav-panel', NavPanel);
customElements.define('comp-toolbar', CompToolbar);
customElements.define('comp-panel', CompPanel);
customElements.define('prop-row', PropRow);
customElements.define('prop-panel', PropPanel);
customElements.define('status-bar', StatusBar);
customElements.define('task-bar', TaskBar);
customElements.define('net-widget', NetWidget);
customElements.define('spin-box', SpinBox);
customElements.define('offset-toolbar', OffsetToolbar);
customElements.define('ink-ellipse', InkEllipse);
customElements.define('ime-bar', ImeBar);
</script>
</body>
</html>
